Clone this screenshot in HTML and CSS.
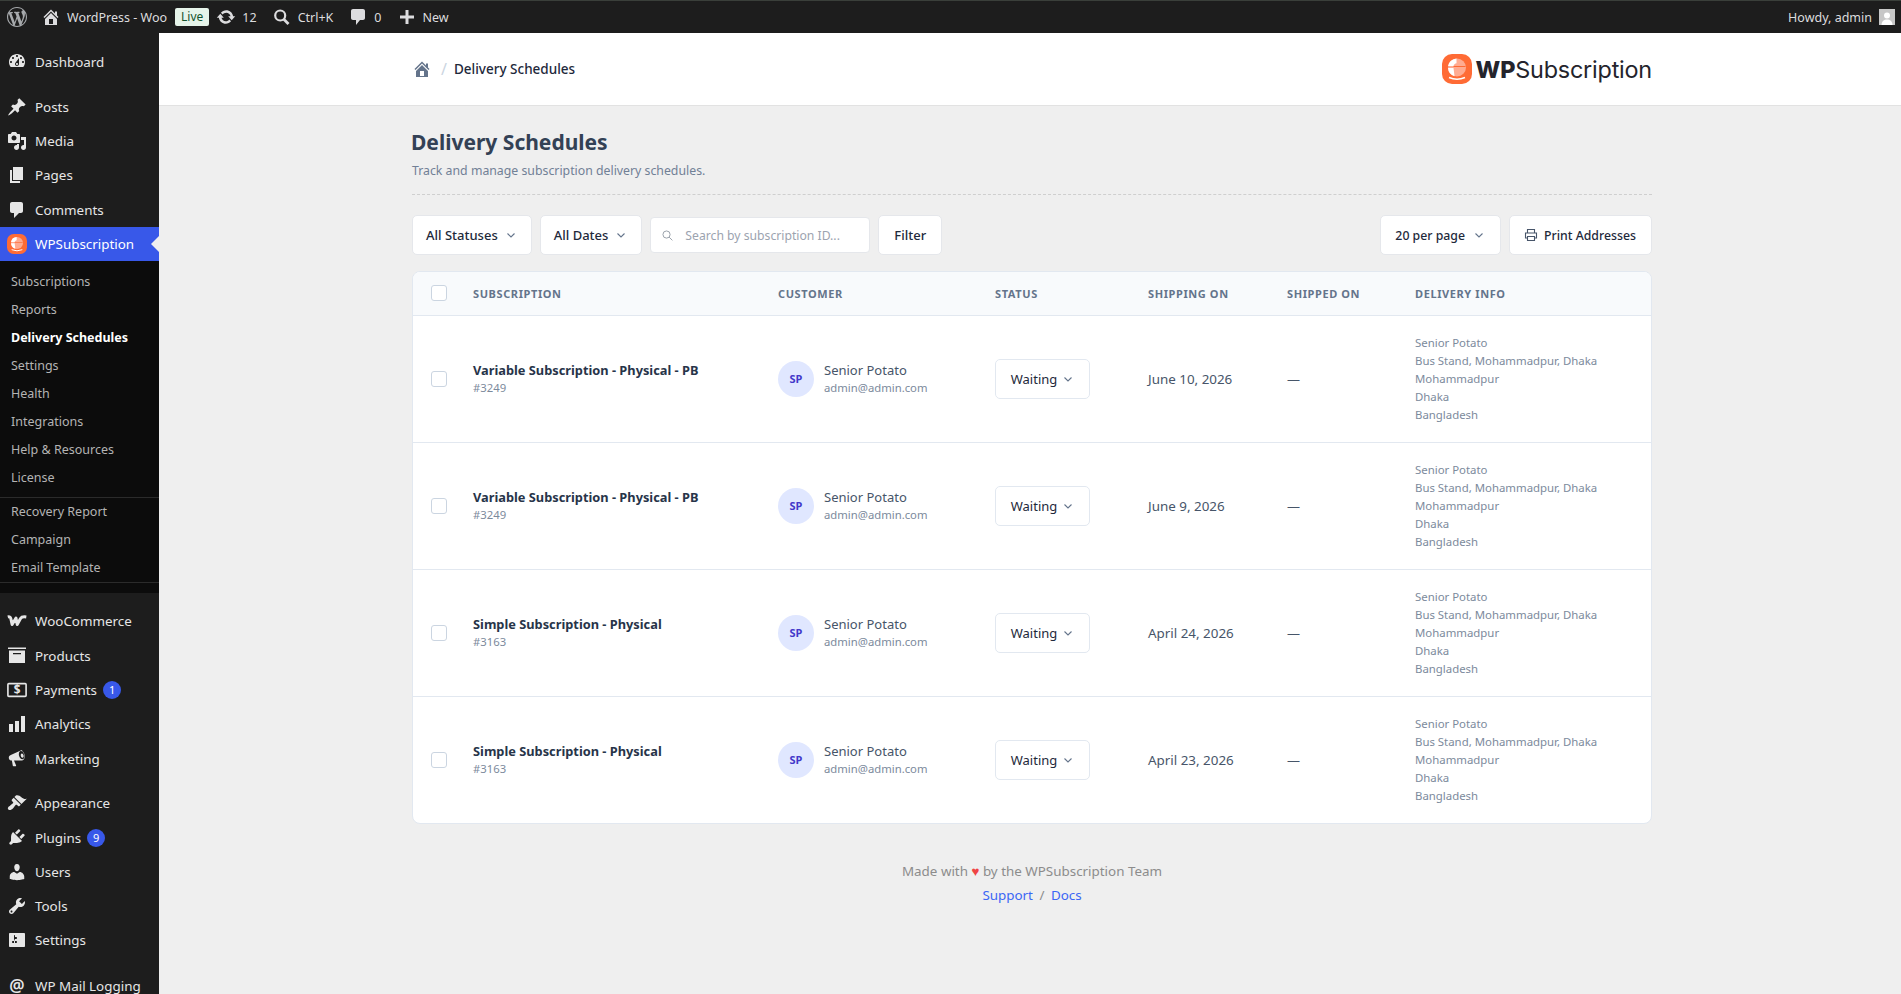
FILE: index.html
```html
<!DOCTYPE html>
<html lang="en">
<head>
  <meta charset="UTF-8">
  <meta name="viewport" content="width=device-width, initial-scale=1.0">
  <title>Delivery Schedules</title>
  <link rel="stylesheet" href="styles.css">
</head>
<body>
  <svg class="sprite" width="0" height="0">
    <symbol id="chevron" viewBox="0 0 12 12"><path d="M2.500 4.500 6 8l3.500-3.500" fill="none" stroke="currentColor" stroke-width="1.100"/></symbol>
    <symbol id="home" viewBox="0 0 20 20"><path d="M16 8.500l1.530 1.530-1.060 1.060L10 4.620l-6.470 6.470-1.060-1.060L10 2.500l4 4v-2h2v4zm-6-2.460l6 5.990V18H4v-5.970zM12 17v-5H8v5h4z"/></symbol>
    <symbol id="logo" viewBox="0 0 30 30">
      <rect x="0" y="0" width="30" height="30" rx="10" fill="#ff6b35"/>
      <circle cx="15" cy="13.500" r="9" fill="#ffab91"/>
      <path d="M14.500 4.500a9 9 0 0 0-8.500 7.500h5.500c.3-1.500 1.500-2.500 3-2.800z" fill="#fff"/>
      <path d="M6 14a9 9 0 0 0 6.500 8.200l-1-8.200z" fill="#fff"/>
      <path d="M11.500 12h12v1h-12z" fill="#ff6b35"/>
      <path d="M7 23.500q8 3.500 16 0" fill="none" stroke="#fff" stroke-width="1.500"/>
    </symbol>
  </svg>

  <header class="adminbar">
    <div class="adminbar-left">
      <svg class="ab-wp" viewBox="0 0 20 20"><path d="M20 10c0-5.510-4.490-10-10-10C4.480 0 0 4.490 0 10c0 5.520 4.480 10 10 10 5.510 0 10-4.480 10-10zM7.780 15.370L4.370 6.220c.55-.02 1.170-.08 1.170-.08.5-.06.44-1.130-.06-1.110 0 0-1.450.11-2.370.11-.18 0-.37 0-.58-.01C4.120 2.690 6.870 1.110 10 1.110c2.330 0 4.450.87 6.050 2.340-.68-.11-1.650.39-1.650 1.580 0 .74.45 1.360.9 2.100.35.61.55 1.360.55 2.460 0 1.490-1.400 5-1.400 5l-3.030-8.370c.54-.02.82-.17.82-.17.5-.05.44-1.250-.06-1.220 0 0-1.440.12-2.380.12-.87 0-2.330-.12-2.330-.12-.5-.03-.56 1.200-.06 1.220l.92.08 1.260 3.410zM17.410 10c.24-.64.74-1.870.43-4.250.7 1.290 1.050 2.710 1.050 4.250 0 3.290-1.730 6.240-4.400 7.780.97-2.590 1.940-5.200 2.920-7.780zM6.100 18.090C3.120 16.650 1.110 13.530 1.110 10c0-1.300.23-2.480.72-3.590C3.250 10.300 4.670 14.200 6.100 18.090zm4.030-6.630l2.580 6.980c-.86.29-1.760.45-2.710.45-.79 0-1.570-.11-2.290-.33.81-2.380 1.620-4.740 2.420-7.100z"/></svg>
      <a class="ab-item ab-site"><svg class="ab-icon" viewBox="0 0 20 20"><use href="#home"/></svg>WordPress - Woo</a>
      <span class="ab-live">Live</span>
      <a class="ab-item ab-updates"><svg class="ab-icon" viewBox="0 0 20 20"><path d="M10.200 3.280c3.530 0 6.430 2.610 6.920 6h2.080l-3.500 4-3.500-4h2.320c-.45-1.970-2.210-3.450-4.320-3.450-1.450 0-2.730.71-3.540 1.780L4.950 5.660C6.230 4.200 8.110 3.280 10.200 3.280zm-.4 13.440c-3.520 0-6.430-2.610-6.920-6H.8l3.500-4c1.170 1.330 2.330 2.670 3.500 4H5.480c.45 1.970 2.210 3.450 4.320 3.450 1.450 0 2.730-.71 3.540-1.780l1.710 1.950c-1.280 1.460-3.150 2.380-5.250 2.380z"/></svg>12</a>
      <a class="ab-item ab-search"><svg class="ab-icon" viewBox="0 0 20 20"><circle cx="8.200" cy="8.500" r="5" fill="none" stroke="currentColor" stroke-width="2.200"/><path d="M11.800 12.300 16.500 17" stroke="currentColor" stroke-width="2.800" fill="none"/></svg>Ctrl+K</a>
      <a class="ab-item ab-comments"><svg class="ab-icon" viewBox="0 0 20 20"><path d="M5 2h10c1.100 0 2 .9 2 2v7c0 1.100-.9 2-2 2h-3l-4 5v-5H5c-1.100 0-2-.9-2-2V4c0-1.100.9-2 2-2z"/></svg>0</a>
      <a class="ab-item ab-new"><svg class="ab-icon" viewBox="0 0 20 20"><path d="M8.500 3h3v5.500H17v3h-5.500V17h-3v-5.500H3v-3h5.500z"/></svg>New</a>
    </div>
    <a class="ab-howdy">Howdy, admin
      <svg class="ab-avatar" viewBox="0 0 16 16"><rect width="16" height="16" fill="#c7c7c7"/><circle cx="8" cy="6.500" r="3" fill="#fff"/><path d="M2.500 16c.3-4 2.500-5.500 5.500-5.500s5.200 1.500 5.500 5.500z" fill="#fff"/></svg>
    </a>
  </header>

  <div class="layout">
    <nav class="sidebar">
      <ul class="menu">
        <li class="menu-item"><svg viewBox="0 0 20 20"><path d="M3.760 16h12.480c1.100-1.370 1.760-3.110 1.760-5 0-4.420-3.580-8-8-8s-8 3.580-8 8c0 1.890.66 3.630 1.760 5zM10 4c.55 0 1 .45 1 1s-.45 1-1 1-1-.45-1-1 .45-1 1-1zM6 6c.55 0 1 .45 1 1s-.45 1-1 1-1-.45-1-1 .45-1 1-1zm8 0c.55 0 1 .45 1 1s-.45 1-1 1-1-.45-1-1 .45-1 1-1zm-5.370 5.550L12 7v6c0 1.100-.9 2-2 2s-2-.9-2-2c0-.57.24-1.080.63-1.450zM4 10c.55 0 1 .45 1 1s-.45 1-1 1-1-.45-1-1 .45-1 1-1zm12 0c.55 0 1 .45 1 1s-.45 1-1 1-1-.45-1-1 .45-1 1-1zm-5 3c0-.55-.45-1-1-1s-1 .45-1 1 .45 1 1 1 1-.45 1-1z"/></svg>Dashboard</li>
        <li class="menu-sep"></li>
        <li class="menu-item"><svg viewBox="0 0 20 20"><path d="M10.440 3.020l1.820-1.820 6.360 6.350-1.830 1.820c-1.050-.68-2.480-.57-3.410.36l-.75.75c-.92.93-1.040 2.350-.35 3.410l-1.830 1.820-2.410-2.410-2.800 2.790c-.42.42-3.380 2.710-3.800 2.290s1.860-3.390 2.280-3.810l2.790-2.790L4.100 9.360l1.830-1.820c1.050.69 2.480.57 3.400-.36l.75-.75c.93-.92 1.050-2.350.36-3.410z"/></svg>Posts</li>
        <li class="menu-item"><svg viewBox="0 0 20 20"><path d="M13 11V4c0-.55-.45-1-1-1h-1.670L9 1H5L3.670 3H2c-.55 0-1 .45-1 1v7c0 .55.45 1 1 1h10c.55 0 1-.45 1-1zM7 4.500c1.380 0 2.500 1.120 2.500 2.500S8.380 9.500 7 9.500 4.500 8.380 4.500 7 5.620 4.500 7 4.500zM14 6h5v10.500c0 1.380-1.120 2.500-2.500 2.500S14 17.880 14 16.500s1.120-2.500 2.500-2.500c.17 0 .34.02.5.05V9h-3V6zm-4 8.050V13h2v3.500c0 1.380-1.120 2.500-2.500 2.500S7 17.880 7 16.500 8.120 14 9.500 14c.17 0 .34.02.5.05z"/></svg>Media</li>
        <li class="menu-item"><svg viewBox="0 0 20 20"><path d="M6 15V2h10v13H6zm-1 1h8v2H3V5h2v11z"/></svg>Pages</li>
        <li class="menu-item"><svg viewBox="0 0 20 20"><path d="M5 2h9c1.100 0 2 .9 2 2v7c0 1.100-.9 2-2 2h-2l-5 5v-5H5c-1.100 0-2-.9-2-2V4c0-1.100.9-2 2-2z"/></svg>Comments</li>
        <li class="menu-item menu-current"><svg class="menu-logo" viewBox="0 0 30 30"><use href="#logo"/></svg>WPSubscription</li>
        <li class="submenu">
          <a>Subscriptions</a>
          <a>Reports</a>
          <a class="submenu-current">Delivery Schedules</a>
          <a>Settings</a>
          <a>Health</a>
          <a>Integrations</a>
          <a>Help &amp; Resources</a>
          <a class="submenu-last">License</a>
          <a>Recovery Report</a>
          <a>Campaign</a>
          <a class="submenu-end">Email Template</a>
        </li>
        <li class="menu-item"><svg viewBox="0 0 20 20"><path class="woo-mark" d="M.8 6c1.700-.5 2.700 0 3 1.500l1.300 6L9 7l1.200 6.500 3.300-6c.8-1.300 2.500-2 5.800-1.500"/></svg>WooCommerce</li>
        <li class="menu-item"><svg viewBox="0 0 20 20"><path fill-rule="evenodd" d="M1 2.500h18v1.500H1zM2 5.500h16V18H2zM6 8v1.300h8V8z"/></svg>Products</li>
        <li class="menu-item"><svg class="menu-wide" viewBox="0 0 22 16"><rect x="1" y="1" width="20" height="14" rx="1" fill="none" stroke="currentColor" stroke-width="1.800"/><text x="11" y="12.700" text-anchor="middle" class="money">$</text></svg>Payments<span class="badge">1</span></li>
        <li class="menu-item"><svg viewBox="0 0 20 20"><path d="M18 18V2h-4v16h4zm-6 0V7H8v11h4zm-6 0v-8H2v8h4z"/></svg>Analytics</li>
        <li class="menu-item"><svg viewBox="0 0 20 20"><path d="M15.200 2.200c-.5-.1-1 0-1.500.3L3.800 7c-1.500.5-2.300 1.800-1.900 3.400.4 1.500 1.600 2.200 3 2.100l.9 5.200c.1.300.3.500.6.500h2.300c.3 0 .5-.3.400-.6l-2.100-5.200 8.100.1c1.900-.2 3-2.600 2.600-5.300-.4-2.400-1.600-3.800-2.500-4zm.3 9.100c-1.400.2-3-1.400-3.500-3.700-.5-2.300.3-4.300 1.700-4.500 1.400-.2 3 1.400 3.500 3.700.5 2.300-.3 4.300-1.700 4.500zm-.7-5.800c-.8.100-1.200 1.100-1 2.300.2 1.200 1.100 2 1.800 1.900.8-.1 1.200-1.100 1-2.300-.2-1.200-1.100-2-1.800-1.900z"/></svg>Marketing</li>
        <li class="menu-sep menu-sep-low"></li>
        <li class="menu-item"><svg viewBox="0 0 20 20"><path d="M14.480 11.060L7.410 3.990l1.500-1.500c.5-.56 2.300-.47 3.510.32 1.210.8 1.430 1.280 2.910 2.100 1.180.64 2.450 1.260 4.450.85zm-.71.71L6.700 4.700 4.930 6.470c-.39.39-.39 1.020 0 1.410l1.060 1.060c.39.39.39 1.030 0 1.420-.6.6-1.430 1.110-2.210 1.690-.35.26-.7.53-1.010.84C1.430 13.230.1 15.240 1.430 16.570s3.340 0 4.680-1.340c.31-.31.58-.66.84-1.010.58-.78 1.090-1.610 1.690-2.210.39-.39 1.020-.39 1.410 0l1.060 1.060c.39.39 1.020.39 1.410 0z"/></svg>Appearance</li>
        <li class="menu-item"><svg viewBox="0 0 20 20"><path d="M13.110 4.360L9.870 7.600 8 5.730l3.240-3.240c.35-.34 1.050-.2 1.560.32.52.51.66 1.210.31 1.550zm-8 1.770l.91-1.120 9.010 9.010-1.190.84c-.71.71-2.630 1.160-3.820 1.160H6.140L4.900 17.260c-.59.59-1.540.59-2.120 0-.59-.58-.59-1.530 0-2.120l1.240-1.240v-3.880c0-1.130.4-3.190 1.090-3.890zm7.260 3.970l3.240-3.240c.34-.35 1.040-.21 1.550.31.52.51.66 1.210.31 1.550l-3.240 3.250z"/></svg>Plugins<span class="badge">9</span></li>
        <li class="menu-item"><svg viewBox="0 0 20 20"><path d="M10 9.250c-2.270 0-2.730-3.440-2.730-3.440C7 4.020 7.820 2 9.970 2c2.160 0 2.980 2.020 2.710 3.810 0 0-.41 3.440-2.680 3.440zm0 2.570L12.720 10c2.390 0 4.520 2.330 4.520 4.530v2.490s-3.650 1.130-7.240 1.130c-3.650 0-7.240-1.130-7.240-1.130v-2.490c0-2.250 1.940-4.480 4.470-4.480z"/></svg>Users</li>
        <li class="menu-item"><svg viewBox="0 0 20 20"><path d="M16.680 9.770c-1.340 1.340-3.300 1.670-4.950.99l-5.410 6.520c-.99.99-2.590.99-3.580 0s-.99-2.59 0-3.570l6.520-5.420c-.68-1.650-.35-3.610.99-4.950 1.280-1.280 3.120-1.620 4.720-1.060l-2.890 2.890 2.820 2.820 2.860-2.870c.53 1.580.18 3.390-1.080 4.670zM3.810 16.210c.4.39 1.040.39 1.430 0 .4-.4.4-1.040 0-1.430-.39-.4-1.030-.4-1.430 0-.39.39-.39 1.030 0 1.430z"/></svg>Tools</li>
        <li class="menu-item"><svg viewBox="0 0 20 20"><path d="M18 16V4c0-.55-.45-1-1-1H3c-.55 0-1 .45-1 1v12c0 .55.45 1 1 1h14c.55 0 1-.45 1-1zM8 11h1c.55 0 1 .45 1 1s-.45 1-1 1H8v1.500c0 .28-.22.5-.5.5s-.5-.22-.5-.5V13H6c-.55 0-1-.45-1-1s.45-1 1-1h1V5.500c0-.28.22-.5.5-.5s.5.22.5.5V7h1c.55 0 1 .45 1 1s-.45 1-1 1h-1v5.500c0 .28-.22.5-.5.5s-.5-.22-.5-.5V9z"/></svg>Settings</li>
        <li class="menu-sep"></li>
        <li class="menu-item"><svg viewBox="0 0 20 20"><text x="10" y="16" text-anchor="middle" class="at">@</text></svg>WP Mail Logging</li>
      </ul>
    </nav>

    <main class="content">
      <div class="topbar">
        <div class="topbar-inner">
          <div class="breadcrumb">
            <svg class="crumb-home" viewBox="0 0 20 20"><use href="#home"/></svg>
            <span class="crumb-sep">/</span>
            <span class="crumb-text">Delivery Schedules</span>
          </div>
          <div class="brand">
            <svg class="brand-logo" viewBox="0 0 30 30"><use href="#logo"/></svg>
            <span class="brand-name"><b>WP</b>Subscription</span>
          </div>
        </div>
      </div>

      <div class="page">
        <h1 class="page-title">Delivery Schedules</h1>
        <p class="page-sub">Track and manage subscription delivery schedules.</p>

        <div class="toolbar">
          <button class="btn">All Statuses <svg class="chev"><use href="#chevron"/></svg></button>
          <button class="btn">All Dates <svg class="chev"><use href="#chevron"/></svg></button>
          <label class="search">
            <svg viewBox="0 0 20 20" class="search-icon"><circle cx="8.500" cy="8.500" r="5.500" fill="none" stroke="currentColor" stroke-width="1.300"/><path d="m12.500 12.500 5 5" stroke="currentColor" stroke-width="1.300"/></svg>
            <span>Search by subscription ID...</span>
          </label>
          <button class="btn btn-filter">Filter</button>
          <button class="btn btn-perpage">20 per page <svg class="chev"><use href="#chevron"/></svg></button>
          <button class="btn btn-print">
            <svg class="print-icon" viewBox="0 0 14 14"><path d="M3.500 5V1.500h7V5M3.500 10H1.500V5h11v5h-2M3.500 8.500h7v4h-7z" fill="none" stroke="currentColor" stroke-width="1.100"/></svg>
            Print Addresses
          </button>
        </div>

        <div class="card">
          <table class="schedules">
            <colgroup>
              <col class="c-check"><col class="c-sub"><col class="c-cust"><col class="c-status"><col class="c-ship"><col class="c-shipped"><col>
            </colgroup>
            <thead>
              <tr>
                <th><span class="check"></span></th>
                <th>Subscription</th>
                <th>Customer</th>
                <th>Status</th>
                <th>Shipping On</th>
                <th>Shipped On</th>
                <th>Delivery Info</th>
              </tr>
            </thead>
            <tbody>
              <tr>
                <td><span class="check"></span></td>
                <td><div class="sub-name">Variable Subscription - Physical - PB</div><div class="sub-id">#3249</div></td>
                <td><div class="cust"><span class="avatar">SP</span><div><div class="cust-name">Senior Potato</div><div class="cust-mail">admin@admin.com</div></div></div></td>
                <td><span class="status">Waiting <svg class="chev"><use href="#chevron"/></svg></span></td>
                <td>June 10, 2026</td>
                <td class="dash">—</td>
                <td class="info">Senior Potato<br>Bus Stand, Mohammadpur, Dhaka<br>Mohammadpur<br>Dhaka<br>Bangladesh</td>
              </tr>
              <tr>
                <td><span class="check"></span></td>
                <td><div class="sub-name">Variable Subscription - Physical - PB</div><div class="sub-id">#3249</div></td>
                <td><div class="cust"><span class="avatar">SP</span><div><div class="cust-name">Senior Potato</div><div class="cust-mail">admin@admin.com</div></div></div></td>
                <td><span class="status">Waiting <svg class="chev"><use href="#chevron"/></svg></span></td>
                <td>June 9, 2026</td>
                <td class="dash">—</td>
                <td class="info">Senior Potato<br>Bus Stand, Mohammadpur, Dhaka<br>Mohammadpur<br>Dhaka<br>Bangladesh</td>
              </tr>
              <tr>
                <td><span class="check"></span></td>
                <td><div class="sub-name">Simple Subscription - Physical</div><div class="sub-id">#3163</div></td>
                <td><div class="cust"><span class="avatar">SP</span><div><div class="cust-name">Senior Potato</div><div class="cust-mail">admin@admin.com</div></div></div></td>
                <td><span class="status">Waiting <svg class="chev"><use href="#chevron"/></svg></span></td>
                <td>April 24, 2026</td>
                <td class="dash">—</td>
                <td class="info">Senior Potato<br>Bus Stand, Mohammadpur, Dhaka<br>Mohammadpur<br>Dhaka<br>Bangladesh</td>
              </tr>
              <tr>
                <td><span class="check"></span></td>
                <td><div class="sub-name">Simple Subscription - Physical</div><div class="sub-id">#3163</div></td>
                <td><div class="cust"><span class="avatar">SP</span><div><div class="cust-name">Senior Potato</div><div class="cust-mail">admin@admin.com</div></div></div></td>
                <td><span class="status">Waiting <svg class="chev"><use href="#chevron"/></svg></span></td>
                <td>April 23, 2026</td>
                <td class="dash">—</td>
                <td class="info">Senior Potato<br>Bus Stand, Mohammadpur, Dhaka<br>Mohammadpur<br>Dhaka<br>Bangladesh</td>
              </tr>
            </tbody>
          </table>
        </div>

        <footer class="foot">
          <p>Made with <span class="heart">♥</span> by the WPSubscription Team</p>
          <p><a>Support</a> <span class="foot-sep">/</span> <a>Docs</a></p>
        </footer>
      </div>
    </main>
  </div>
</body>
</html>
```

FILE: styles.css
```css
* {
  box-sizing: border-box;
}

html, body {
  height: 100%;
}

body {
  margin: 0;
  font-family: "Noto Sans", sans-serif;
  font-size: 13px;
  color: #1e293b;
  background: #efefef;
  overflow: hidden;
}

.sprite {
  position: absolute;
}

/* admin bar */
.adminbar {
  height: 33px;
  background: #1d1d1d;
  border-top: 1px solid #3a3f3a;
  color: #dcdcde;
  display: flex;
  justify-content: space-between;
  align-items: center;
  padding: 0 6px 0 7px;
  font-size: 12.5px;
}

.adminbar-left {
  display: flex;
  align-items: center;
}

.ab-wp {
  width: 20px;
  height: 20px;
  fill: #a7aaad;
  margin-right: 14px;
}

.ab-item {
  display: flex;
  align-items: center;
  gap: 6px;
}

.ab-icon {
  width: 20px;
  height: 20px;
  fill: #dcdcde;
  color: #dcdcde;
}

.ab-site { margin-right: 8px; }
.ab-updates { margin-left: 7px; }
.ab-search { margin-left: 15px; }
.ab-comments { margin-left: 15px; }
.ab-new { margin-left: 15px; }

.ab-live {
  background: #e6f4ea;
  color: #14532d;
  font-size: 12px;
  line-height: 18px;
  padding: 0 6px;
  border-radius: 2px;
}

.ab-howdy {
  display: flex;
  align-items: center;
  gap: 7px;
}

.ab-avatar {
  width: 16px;
  height: 16px;
}

/* sidebar */
.layout {
  display: flex;
  height: calc(100vh - 33px);
}

.sidebar {
  width: 159px;
  flex: none;
  background: #1d1d1d;
  overflow: hidden;
  padding-top: 11.4px;
}

.menu {
  list-style: none;
  margin: 0;
  padding: 0;
}

.menu-item {
  position: relative;
  height: 34.3px;
  display: flex;
  align-items: center;
  padding-left: 35px;
  font-size: 13.4px;
  color: #e6e6e6;
}

.menu-item > svg {
  position: absolute;
  left: 7px;
  top: 7px;
  width: 20px;
  height: 20px;
  fill: #e6e6e6;
  color: #e6e6e6;
}

.menu-item > svg.menu-wide {
  top: 9px;
  height: 16px;
}

.menu-sep {
  height: 11px;
}

.menu-sep-low {
  height: 10.5px;
}

.menu-current {
  background: #3858e9;
  color: #fff;
}

.menu-current::after {
  content: "";
  position: absolute;
  right: 0;
  top: 9px;
  border: 8px solid transparent;
  border-left: 0;
  border-right-color: #efefef;
}

.submenu {
  background: #0c0c0c;
  padding: 7px 0 0;
  margin-bottom: 11px;
  height: 332px;
}

.submenu a {
  display: block;
  height: 28px;
  line-height: 28px;
  padding-left: 11px;
  font-size: 12.5px;
  color: #b4b4b4;
}

.submenu a.submenu-current {
  color: #fff;
  font-weight: 700;
}

.submenu a.submenu-last {
  height: 34px;
  border-bottom: 1px solid #2b2b2b;
}

.submenu a.submenu-end {
  height: 29px;
  border-bottom: 1px solid #2b2b2b;
}

.woo-mark {
  fill: none;
  stroke: currentColor;
  stroke-width: 3;
  stroke-linejoin: round;
}

.money {
  font-size: 13px;
  font-weight: 700;
  fill: currentColor;
  font-family: "Noto Sans", sans-serif;
}

.at {
  font-size: 17px;
  font-weight: 600;
  fill: currentColor;
  font-family: "Noto Sans", sans-serif;
}

.badge {
  width: 18px;
  height: 18px;
  line-height: 18px;
  margin-left: 6px;
  border-radius: 50%;
  text-align: center;
  background: #3858e9;
  color: #fff;
  font-size: 11px;
}

/* content */
.content {
  flex: 1;
  min-width: 0;
}

.topbar {
  height: 73px;
  background: #fff;
  border-bottom: 1px solid #e2e2e2;
}

.topbar-inner,
.page {
  width: 1240px;
  margin-left: 253px;
}

.topbar-inner {
  height: 100%;
  display: flex;
  justify-content: space-between;
  align-items: center;
}

.breadcrumb {
  display: flex;
  align-items: center;
}

.crumb-home {
  width: 20px;
  height: 20px;
  fill: #64748b;
}

.crumb-sep {
  margin: 0 7px 0 9px;
  color: #cbd5e1;
  font-size: 16px;
}

.crumb-text {
  font-size: 13.5px;
  font-weight: 500;
  color: #1e293b;
}

.brand {
  display: flex;
  align-items: center;
  gap: 4px;
}

.brand-logo {
  width: 30px;
  height: 30px;
}

.brand-name {
  font-family: Inter, sans-serif;
  font-size: 23.4px;
  color: #24242c;
  letter-spacing: -.2px;
}

.brand-name b {
  font-weight: 800;
}

.page-title {
  margin: 22px 0 0 -1px;
  font-size: 21px;
  line-height: 29px;
  font-weight: 700;
  color: #334155;
}

.page-sub {
  margin: 5px 0 0;
  font-size: 12.3px;
  line-height: 18px;
  color: #718096;
  padding-bottom: 14px;
  border-bottom: 1px dashed #cfcfcf;
}

/* toolbar */
.toolbar {
  display: flex;
  align-items: center;
  gap: 8px;
  margin-top: 20px;
}

.btn {
  height: 40px;
  padding: 0 14px 0 13px;
  display: flex;
  align-items: center;
  gap: 7px;
  background: #fff;
  border: 1px solid #e5e7eb;
  border-radius: 5px;
  font: 500 13px "Noto Sans", sans-serif;
  color: #1e293b;
}

.btn-filter {
  padding: 0 15px;
}

.btn-perpage,
.btn-print {
  padding: 0 15px 0 14px;
  font-size: 12.3px;
}

.btn-perpage {
  margin-left: auto;
  gap: 8px;
}

.btn-print {
  gap: 6px;
}

.chev {
  width: 12px;
  height: 12px;
  color: #64748b;
}

.search {
  width: 220px;
  height: 36px;
  padding: 0 10px;
  display: flex;
  align-items: center;
  gap: 11px;
  background: #fff;
  border: 1px solid #e5e7eb;
  border-radius: 4px;
  color: #9ca3af;
  font-size: 12.2px;
}

.search-icon {
  width: 13px;
  height: 13px;
  color: #8a929c;
}

.print-icon {
  width: 14px;
  height: 14px;
  color: #475569;
}

/* table */
.card {
  margin-top: 16px;
  background: #fff;
  border: 1px solid #e2e8f0;
  border-radius: 8px;
  overflow: hidden;
}

.schedules {
  width: 100%;
  border-collapse: collapse;
  table-layout: fixed;
}

.c-check { width: 60px; }
.c-sub { width: 305px; }
.c-cust { width: 217px; }
.c-status { width: 152px; }
.c-ship { width: 140px; }
.c-shipped { width: 128px; }

.schedules th {
  height: 43px;
  padding: 0;
  text-align: left;
  background: #f8fafc;
  border-bottom: 1px solid #e2e8f0;
  font-size: 11px;
  font-weight: 700;
  letter-spacing: .6px;
  text-transform: uppercase;
  color: #64748b;
}

.schedules td {
  height: 127px;
  padding: 0;
  border-bottom: 1px solid #e2e8f0;
  color: #475569;
}

.schedules tbody tr:last-child td {
  border-bottom: 0;
}

.schedules th:nth-child(5),
.schedules td:nth-child(5) {
  padding-left: 1px;
}

.schedules td:nth-child(5) {
  font-size: 13.4px;
}

.check {
  display: block;
  width: 16px;
  height: 16px;
  margin-left: 18px;
  background: #fff;
  border: 1px solid #cbd5e1;
  border-radius: 3px;
}

.sub-name {
  font-size: 12.8px;
  font-weight: 700;
  color: #273449;
  line-height: 18px;
}

.sub-id,
.cust-mail {
  font-size: 11.3px;
  color: #7c8a9c;
  line-height: 17px;
}

.cust {
  display: flex;
  align-items: center;
  gap: 10px;
}

.avatar {
  width: 36px;
  height: 36px;
  border-radius: 50%;
  display: flex;
  align-items: center;
  justify-content: center;
  background: #e0e7ff;
  color: #4338ca;
  font-size: 11px;
  font-weight: 700;
}

.cust-name {
  color: #475569;
  line-height: 18px;
}

.status {
  width: 95px;
  height: 40px;
  display: flex;
  align-items: center;
  justify-content: center;
  gap: 5px;
  border: 1px solid #e2e8f0;
  border-radius: 5px;
  color: #1e293b;
}

.dash {
  color: #94a3b8;
}

.schedules td.info {
  font-size: 11.4px;
  line-height: 18px;
  color: #7c8a9c;
}

/* footer */
.foot {
  margin-top: 37px;
  text-align: center;
  font-size: 13.4px;
  color: #8c8c8c;
}

.foot p {
  margin: 0 0 4px;
  line-height: 20px;
}

.heart {
  color: #ef4444;
}

.foot a {
  color: #3b66f5;
}

.foot-sep {
  margin: 0 3px;
}
```
